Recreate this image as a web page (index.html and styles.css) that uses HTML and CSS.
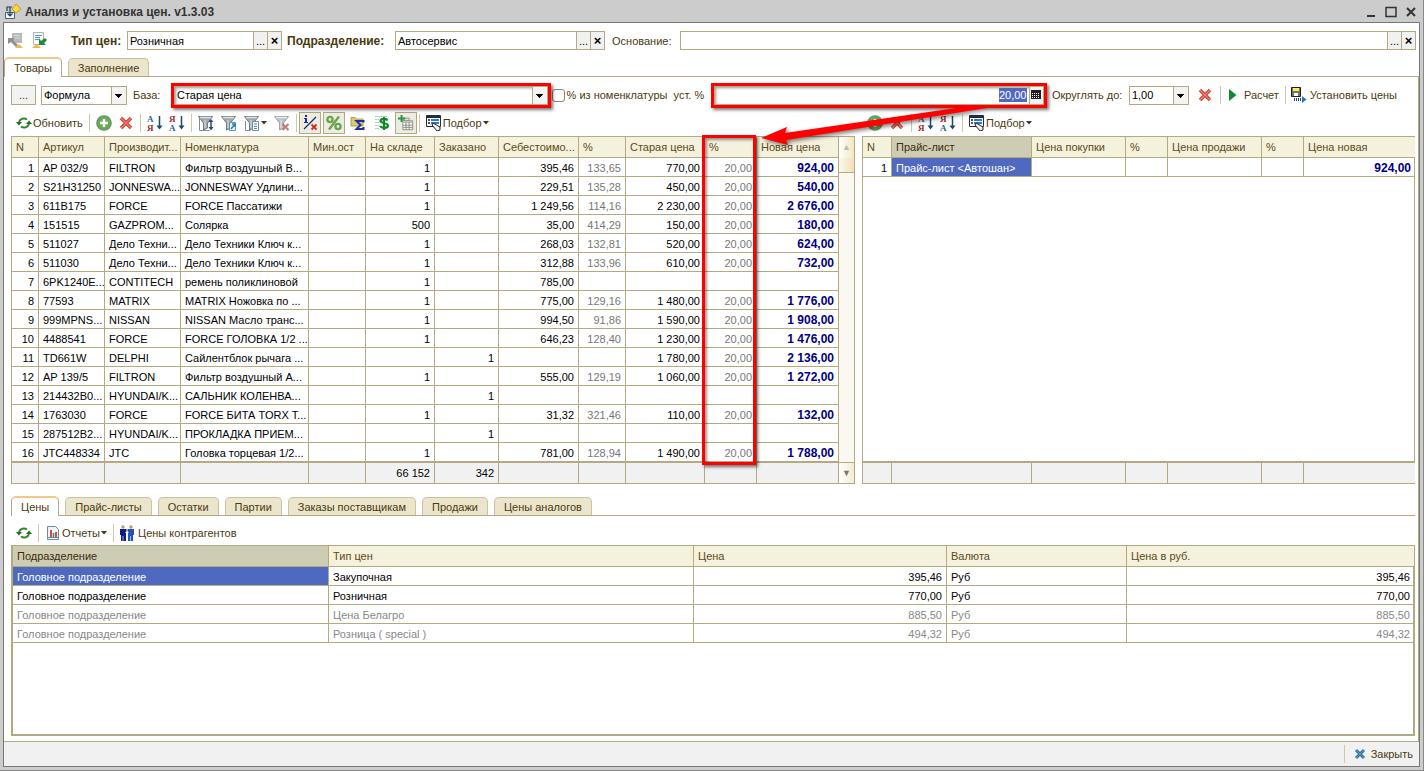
FILE: index.html
```html
<!DOCTYPE html>
<html lang="ru">
<head>
<meta charset="utf-8">
<title>Анализ и установка цен. v1.3.03</title>
<link rel="stylesheet" href="styles.css">
</head>
<body>
<svg class="defs" width="0" height="0" aria-hidden="true">
  <symbol id="refresh" viewBox="0 0 16 16"><path d="M3 7a5 4.500 0 0 1 8-2.500M13 9a5 4.500 0 0 1-8 2.500" fill="none" stroke="#2f8a2f" stroke-width="2"/><path d="M0 7h6L3 10.500zM10 9h6L13 5.500z" fill="#1f6f24"/></symbol>
  <symbol id="plus" viewBox="0 0 16 16"><circle cx="8" cy="8" r="7.800" fill="#6f8f66"/><circle cx="8" cy="8" r="6.500" fill="#68ad55"/><path d="M8 4v8M4 8h8" stroke="#fff" stroke-width="2.500"/></symbol>
  <symbol id="del" viewBox="0 0 16 16"><path d="M3 3l10 10M13 3L3 13" stroke="#d23a30" stroke-width="3.400"/><path d="M3 3l10 10M13 3L3 13" stroke="#ee8177" stroke-width="1.200"/></symbol>
  <symbol id="arrow-down" viewBox="0 0 16 18"><path d="M12.500 2v12" stroke="#234766" stroke-width="1.500"/><path d="M9.500 11.500h6l-3 4z" fill="#234766"/></symbol>
  <symbol id="funnel" viewBox="0 0 16 16"><path d="M.500 1.500h14L9.500 8v5l-4 2V8z" fill="#a3a8ab" stroke="#737b80"/><path d="M2 2.500h11" stroke="#dfe4e7" stroke-width="1.500"/><path d="M7 5v8" stroke="#dfe4e7"/></symbol>
  <symbol id="filter-set" viewBox="0 0 16 16"><path d="M1.500 3v12.500h10" fill="none" stroke="#7b8e9b"/><use href="#funnel"/><path d="M13 6v7" stroke="#2b4d6b" stroke-width="1.500"/><path d="M10.500 7L13 4 15.500 7zM10.500 12h5L13 15.500z" fill="#2b4d6b"/></symbol>
  <symbol id="filter-value" viewBox="0 0 16 16"><use href="#funnel"/><path d="M8.500 7.500h6v8h-6z" fill="#eaf4fb" stroke="#5793bd"/><path d="M10 14l4-5M11 9h3v3" fill="none" stroke="#357dad" stroke-width="1.500"/></symbol>
  <symbol id="filter-list" viewBox="0 0 16 16"><path d="M1.500 6v9.500h5" fill="none" stroke="#6d8ea6"/><use href="#funnel"/><path d="M8.500 6.500h6v9h-6z" fill="#f4f9fc" stroke="#6d8ea6"/><path d="M10 9h3M10 11.500h3M10 13.500h3" stroke="#5d86a3"/></symbol>
  <symbol id="filter-off" viewBox="0 0 16 16"><g opacity=".7"><use href="#funnel"/></g><path d="M8.500 9l6 6M14.500 9l-6 6" stroke="#c57a76" stroke-width="2"/></symbol>
  <symbol id="info" viewBox="0 0 16 16"><path d="M3 0h2v2H3zM2 3h3v4h1v1H2V7h1V4H2z" fill="#1c2d91"/><path d="M14 2L2 14" stroke="#1c2d60" stroke-width="1.300"/><path d="M9.500 9.500l5 5M14.500 9.500l-5 5" stroke="#d9281c" stroke-width="1.800"/></symbol>
  <symbol id="percent" viewBox="0 0 16 16"><g fill="none" stroke="#6aa54a" stroke-width="2.400"><circle cx="4" cy="4.500" r="2.600"/><circle cx="12" cy="11.500" r="2.600"/><path d="M13 1.500l-10 13"/></g></symbol>
  <symbol id="sum" viewBox="0 0 16 16"><path d="M1 2.500h4l1 1.500h7v7H1z" fill="#d8c977" stroke="#b3a04f"/><path d="M13.500 7.500V6H6.500l4 4-4 4h7v-2" fill="none" stroke="#23329b" stroke-width="2"/></symbol>
  <symbol id="dollar" viewBox="0 0 16 16"><path d="M1.500 1.500h12M1.500 4.500h4M1.500 7.500h4M1.500 10.500h4M1.500 13.500h4" stroke="#5aa6a0" stroke-dasharray="1 1"/><path d="M13.500 5.500c-1-2.500-7-2-7 .500s7.500 1.500 7.500 4.500-6.500 3-8 .500M10 2v13" fill="none" stroke="#0b8a23" stroke-width="2.200"/></symbol>
  <symbol id="grid-add" viewBox="0 0 18 18"><path d="M5.500 3.500h7v3h-7z" fill="#ddd" stroke="#858b82"/><path d="M5.500 6.500h11v10h-11z" fill="#f8f8f4" stroke="#858b82"/><path d="M6 8h10" stroke="#b9beb6" stroke-width="2"/><path d="M6 11.500h10M6 14h10M9 8v8M12.500 8v8" stroke="#858b82"/><path d="M4 0v8M0 4h8" stroke="#31933a" stroke-width="2.200"/></symbol>
  <symbol id="pick" viewBox="0 0 16 16"><path d="M.500.500h14v11H.500z" fill="#fff" stroke="#242a42"/><path d="M1 2h13" stroke="#242a42" stroke-width="2"/><path d="M5 5h8M5 8h8" stroke="#287fd0" stroke-width="2"/><path d="M2 5h2M2 8h2" stroke="#222" stroke-width="1.500"/><path d="M7 8l7 4v3l-3 1-5-6z" fill="#eee" stroke="#222"/></symbol>
  <symbol id="report" viewBox="0 0 14 16"><path d="M1.500 1.500h8l3 3v10h-11z" fill="#edf4f9" stroke="#6d8da5"/><path d="M2 12.500h10" stroke="#5f8db0"/><path d="M5 5v7M10 7v5" stroke="#d03a30" stroke-width="1.800"/><path d="M7.500 8v4" stroke="#3d9651" stroke-width="1.600"/></symbol>
  <symbol id="people" viewBox="0 0 14 16"><circle cx="3" cy="2" r="1.700" fill="#c29674"/><circle cx="11" cy="2" r="1.700" fill="#c29674"/><path d="M0 4h6.500v6H6v6H1v-6H0z" fill="#101a8e"/><path d="M7.500 4H14v6h-1v6H8v-6h-.500z" fill="#2452b8"/><path d="M3 11v5M10.500 11v5" stroke="#fff" stroke-width=".6"/><path d="M5 8l2-2 2 2H8v4H6V8z" fill="#fff"/></symbol>
  <symbol id="save" viewBox="0 0 16 16"><path d="M.500.500h9v9h-9z" fill="#737373" stroke="#222"/><path d="M2 1h6v3H2z" fill="#ffee4b"/><path d="M3 6h4v3H3z" fill="#fff"/><path d="M3 12.500h8" stroke="#244c7e" stroke-width="3" stroke-dasharray="1 1"/><path d="M11 9l4.500 3.500L11 16z" fill="#2876bb"/></symbol>
  <symbol id="play" viewBox="0 0 8 12"><path d="M0 0l7.500 6L0 12z" fill="#118a2f"/></symbol>
  <symbol id="calc" viewBox="0 0 10 10"><path d="M0 0h10v9H0z" fill="#222"/><path d="M1 3.500h8M1 5.500h8M1 7.500h8" stroke="#fff" stroke-dasharray="1 1"/></symbol>
  <symbol id="caret" viewBox="0 0 6 4"><path d="M0 0h6L3 3.500z" fill="#443617"/></symbol>
  <symbol id="doc-up" viewBox="0 0 17 17"><path d="M5 1h10v10H5z" fill="#b6b9ba"/><path d="M7 3.500h6M7 6h6" stroke="#d7dadb"/><path d="M1 6h7L6 8l5 5-2 2-5-5-3 2z" fill="#8e9192"/><path d="M8 16l4-4 4 4z" fill="#e5bd57"/></symbol>
  <symbol id="doc-down" viewBox="0 0 17 17"><path d="M2.500.500h10v12h-10z" fill="#f8fafb" stroke="#a9b6be"/><path d="M4 3.500h7M4 5.500h5M4 7.500h4" stroke="#5f9bc2"/><path d="M14 6l2 2-3 3 2 2H8V6l2 3z" fill="#1b8a39"/><path d="M1 16l4.500-4 4.500 4z" fill="#f0b93a"/></symbol>
  <symbol id="app" viewBox="0 0 16 16"><path d="M11 0l5 5-5 4-4-4z" fill="#fbd63f" stroke="#c39b20"/><path d="M.500 8.500h9v6h-9z" fill="#f4f9fd" stroke="#46627b"/><path d="M5 3v9M2.500 9.500L5 12l2.500-2.500M7 3H2v4" fill="none" stroke="#243f58" stroke-width="1.200"/></symbol>
  <symbol id="close" viewBox="0 0 12 12"><path d="M2 2l8 8M10 2l-8 8" stroke="#2f6e9e" stroke-width="3"/><path d="M2 2l8 8M10 2l-8 8" stroke="#5a9cca"/></symbol>
</svg>

<div class="window">
  <header class="titlebar">
    <svg class="i16"><use href="#app"/></svg>
    <h1>Анализ и установка цен. v1.3.03</h1>
    <button class="win" aria-label="Свернуть"><svg viewBox="0 0 12 12"><path d="M2 10h8" stroke="#333" stroke-width="2"/></svg></button>
    <button class="win" aria-label="Развернуть"><svg viewBox="0 0 12 12"><path d="M1 1.500h10v9H1z" fill="none" stroke="#333" stroke-width="1.500"/></svg></button>
    <button class="win" aria-label="Закрыть окно"><svg viewBox="0 0 12 12"><path d="M2 2l8 8M10 2l-8 8" stroke="#333" stroke-width="2"/></svg></button>
  </header>

  <main class="client">
    <form class="head">
      <button type="button" class="tool first" aria-label="Записать"><svg class="i17"><use href="#doc-up"/></svg></button>
      <button type="button" class="tool second" aria-label="Загрузить"><svg class="i17"><use href="#doc-down"/></svg></button>
      <label class="strong lb-type" for="type">Тип цен:</label>
      <div class="field f-type"><input id="type" value="Розничная"><button type="button" aria-label="Выбрать тип">...</button><button type="button" class="x" aria-label="Очистить тип">×</button></div>
      <label class="strong lb-dep" for="dep">Подразделение:</label>
      <div class="field f-dep"><input id="dep" value="Автосервис"><button type="button" aria-label="Выбрать подразделение">...</button><button type="button" class="x" aria-label="Очистить подразделение">×</button></div>
      <label class="lb-base" for="reason">Основание:</label>
      <div class="field grow"><input id="reason"><button type="button" aria-label="Выбрать основание">...</button><button type="button" class="x" aria-label="Очистить основание">×</button></div>
    </form>

    <nav class="tabs top"><button class="on">Товары</button><button>Заполнение</button></nav>

    <section class="panel">
      <form class="formula">
        <button type="button" class="dots" aria-label="Настройка">...</button>
        <div class="field pick f-formula"><select aria-label="Способ"><option>Формула</option></select></div>
        <label class="lb-b" for="basis">База:</label>
        <div class="mark m-basis"><div class="field pick"><select id="basis"><option>Старая цена</option></select></div></div>
        <input type="checkbox" id="nom" class="check"><label class="lb-nom" for="nom">% из номенклатуры</label>
        <label class="lb-pct" for="pct">уст. %</label>
        <div class="mark m-pct"><div class="field end"><input id="pct" class="sel" value="20,00"><button type="button" aria-label="Калькулятор"><svg width="10" height="10"><use href="#calc"/></svg></button></div></div>
        <label class="lb-round" for="round">Округлять до:</label>
        <div class="field pick f-round"><select id="round"><option>1,00</option></select></div>
        <button type="button" class="tool clear" aria-label="Очистить"><svg class="i16"><use href="#del"/></svg></button>
        <i class="sep"></i>
        <button type="button" class="tool calc"><svg width="8" height="12"><use href="#play"/></svg>Расчет</button>
        <i class="sep"></i>
        <button type="button" class="tool set"><svg class="i16"><use href="#save"/></svg>Установить цены</button>
      </form>

      <div class="split">
        <div class="left">
          <div class="bar">
            <button class="tool"><svg class="i16"><use href="#refresh"/></svg>Обновить</button><i class="sep"></i>
            <button class="tool" aria-label="Добавить"><svg class="i16"><use href="#plus"/></svg></button>
            <button class="tool" aria-label="Удалить"><svg class="i16"><use href="#del"/></svg></button><i class="sep"></i>
            <button class="tool" aria-label="По возрастанию"><svg class="i18" viewBox="0 0 16 18"><text x="0" y="8" class="glyph blue">А</text><text x="0" y="17" class="glyph red">Я</text><use href="#arrow-down"/></svg></button>
            <button class="tool" aria-label="По убыванию"><svg class="i18" viewBox="0 0 16 18"><text x="0" y="8" class="glyph red">Я</text><text x="0" y="17" class="glyph blue">А</text><use href="#arrow-down"/></svg></button><i class="sep"></i>
            <span class="filters">
            <button class="tool" aria-label="Отбор"><svg class="i16"><use href="#filter-set"/></svg></button>
            <button class="tool" aria-label="Отбор по значению"><svg class="i16"><use href="#filter-value"/></svg></button>
            <button class="tool" aria-label="Список отборов"><svg class="i16"><use href="#filter-list"/></svg><svg class="caret"><use href="#caret"/></svg></button>
            <button class="tool" aria-label="Снять отбор"><svg class="i16"><use href="#filter-off"/></svg></button>
            </span><i class="sep"></i>
            <span class="toggles">
            <button class="tool down" aria-label="Сведения"><svg class="i16"><use href="#info"/></svg></button>
            <button class="tool down" aria-label="Проценты"><svg class="i16"><use href="#percent"/></svg></button>
            <button class="tool" aria-label="Итоги"><svg class="i16"><use href="#sum"/></svg></button>
            <button class="tool" aria-label="Валюта"><svg class="i16"><use href="#dollar"/></svg></button>
            <button class="tool down" aria-label="Колонки"><svg class="i18"><use href="#grid-add"/></svg></button>
            </span><i class="sep"></i>
            <button class="tool"><svg class="i16"><use href="#pick"/></svg>Подбор<svg class="caret"><use href="#caret"/></svg></button>
          </div>
          <div class="gridbox">
            <table class="grid goods">
              <colgroup><col style="width:27px"><col style="width:66px"><col style="width:76px"><col style="width:128px"><col style="width:57px"><col style="width:69px"><col style="width:64px"><col style="width:80px"><col style="width:47px"><col style="width:79px"><col style="width:52px"><col style="width:82px"></colgroup>
              <thead><tr><th>N</th><th>Артикул</th><th>Производит...</th><th>Номенклатура</th><th>Мин.ост</th><th>На складе</th><th>Заказано</th><th>Себестоимо...</th><th>%</th><th>Старая цена</th><th>%</th><th>Новая цена</th></tr></thead>
              <tbody>
              <tr><td>1</td><td>AP 032/9</td><td>FILTRON</td><td>Фильтр воздушный B...</td><td></td><td>1</td><td></td><td>395,46</td><td>133,65</td><td>770,00</td><td>20,00</td><td>924,00</td></tr>
              <tr><td>2</td><td>S21H31250</td><td>JONNESWA...</td><td>JONNESWAY Удлини...</td><td></td><td>1</td><td></td><td>229,51</td><td>135,28</td><td>450,00</td><td>20,00</td><td>540,00</td></tr>
              <tr><td>3</td><td>611B175</td><td>FORCE</td><td>FORCE Пассатижи</td><td></td><td>1</td><td></td><td>1 249,56</td><td>114,16</td><td>2 230,00</td><td>20,00</td><td>2 676,00</td></tr>
              <tr><td>4</td><td>151515</td><td>GAZPROM...</td><td>Солярка</td><td></td><td>500</td><td></td><td>35,00</td><td>414,29</td><td>150,00</td><td>20,00</td><td>180,00</td></tr>
              <tr><td>5</td><td>511027</td><td>Дело Техни...</td><td>Дело Техники Ключ к...</td><td></td><td>1</td><td></td><td>268,03</td><td>132,81</td><td>520,00</td><td>20,00</td><td>624,00</td></tr>
              <tr><td>6</td><td>511030</td><td>Дело Техни...</td><td>Дело Техники Ключ к...</td><td></td><td>1</td><td></td><td>312,88</td><td>133,96</td><td>610,00</td><td>20,00</td><td>732,00</td></tr>
              <tr><td>7</td><td>6PK1240E...</td><td>CONTITECH</td><td>ремень поликлиновой</td><td></td><td>1</td><td></td><td>785,00</td><td></td><td></td><td></td><td></td></tr>
              <tr><td>8</td><td>77593</td><td>MATRIX</td><td>MATRIX Ножовка по ...</td><td></td><td>1</td><td></td><td>775,00</td><td>129,16</td><td>1 480,00</td><td>20,00</td><td>1 776,00</td></tr>
              <tr><td>9</td><td>999MPNS...</td><td>NISSAN</td><td>NISSAN Масло транс...</td><td></td><td>1</td><td></td><td>994,50</td><td>91,86</td><td>1 590,00</td><td>20,00</td><td>1 908,00</td></tr>
              <tr><td>10</td><td>4488541</td><td>FORCE</td><td>FORCE ГОЛОВКА 1/2 ...</td><td></td><td>1</td><td></td><td>646,23</td><td>128,40</td><td>1 230,00</td><td>20,00</td><td>1 476,00</td></tr>
              <tr><td>11</td><td>TD661W</td><td>DELPHI</td><td>Сайлентблок рычага ...</td><td></td><td></td><td>1</td><td></td><td></td><td>1 780,00</td><td>20,00</td><td>2 136,00</td></tr>
              <tr><td>12</td><td>AP 139/5</td><td>FILTRON</td><td>Фильтр воздушный A...</td><td></td><td>1</td><td></td><td>555,00</td><td>129,19</td><td>1 060,00</td><td>20,00</td><td>1 272,00</td></tr>
              <tr><td>13</td><td>214432B0...</td><td>HYUNDAI/K...</td><td>САЛЬНИК КОЛЕНВА...</td><td></td><td></td><td>1</td><td></td><td></td><td></td><td></td><td></td></tr>
              <tr><td>14</td><td>1763030</td><td>FORCE</td><td>FORCE БИТА TORX T...</td><td></td><td>1</td><td></td><td>31,32</td><td>321,46</td><td>110,00</td><td>20,00</td><td>132,00</td></tr>
              <tr><td>15</td><td>287512B2...</td><td>HYUNDAI/K...</td><td>ПРОКЛАДКА ПРИЕМ...</td><td></td><td></td><td>1</td><td></td><td></td><td></td><td></td><td></td></tr>
              <tr><td>16</td><td>JTC448334</td><td>JTC</td><td>Головка торцевая 1/2...</td><td></td><td>1</td><td></td><td>781,00</td><td>128,94</td><td>1 490,00</td><td>20,00</td><td>1 788,00</td></tr>
              </tbody>
              <tfoot><tr><td></td><td></td><td></td><td></td><td></td><td>66 152</td><td>342</td><td></td><td></td><td></td><td></td><td></td></tr></tfoot>
            </table>
            <div class="scroll"><span class="up">▲</span><span class="thumb"></span><span class="dn">▼</span></div>
            <div class="colmark"></div>
          </div>
        </div>

        <div class="right">
          <div class="bar">
            <button class="tool" aria-label="Добавить"><svg class="i16"><use href="#plus"/></svg></button>
            <button class="tool" aria-label="Удалить"><svg class="i16"><use href="#del"/></svg></button><i class="sep"></i>
            <button class="tool" aria-label="По возрастанию"><svg class="i18" viewBox="0 0 16 18"><text x="0" y="8" class="glyph blue">А</text><text x="0" y="17" class="glyph red">Я</text><use href="#arrow-down"/></svg></button>
            <button class="tool" aria-label="По убыванию"><svg class="i18" viewBox="0 0 16 18"><text x="0" y="8" class="glyph red">Я</text><text x="0" y="17" class="glyph blue">А</text><use href="#arrow-down"/></svg></button><i class="sep"></i>
            <button class="tool"><svg class="i16"><use href="#pick"/></svg>Подбор<svg class="caret"><use href="#caret"/></svg></button>
          </div>
          <div class="pricebox">
            <table class="grid price">
              <colgroup><col style="width:29px"><col style="width:140px"><col style="width:94px"><col style="width:42px"><col style="width:94px"><col style="width:42px"><col style="width:111px"></colgroup>
              <thead><tr><th>N</th><th class="cur">Прайс-лист</th><th>Цена покупки</th><th>%</th><th>Цена продажи</th><th>%</th><th>Цена новая</th></tr></thead>
              <tbody><tr><td>1</td><td class="act">Прайс-лист &lt;Автошан&gt;</td><td></td><td></td><td></td><td></td><td>924,00</td></tr>
              <tr class="rest"><td colspan="7"></td></tr></tbody>
              <tfoot><tr><td></td><td></td><td></td><td></td><td></td><td></td><td></td></tr></tfoot>
            </table>
          </div>
          <svg class="arrow" viewBox="0 0 260 50" aria-hidden="true"><path d="M20 30L46 19 44 25 215 0 246 0 45 32 47 37z" fill="#f00"/></svg>
        </div>
      </div>

      <nav class="tabs low"><button class="on">Цены</button><button>Прайс-листы</button><button>Остатки</button><button>Партии</button><button>Заказы поставщикам</button><button>Продажи</button><button>Цены аналогов</button></nav>
      <div class="bar lowbar">
        <button class="tool" aria-label="Обновить цены"><svg class="i16"><use href="#refresh"/></svg></button><i class="sep"></i>
        <button class="tool"><svg class="i16"><use href="#report"/></svg>Отчеты<svg class="caret"><use href="#caret"/></svg></button><i class="sep"></i>
        <button class="tool people"><svg class="i16"><use href="#people"/></svg>Цены контрагентов</button>
      </div>
      <div class="lowbox">
        <table class="grid prices">
          <colgroup><col style="width:316px"><col style="width:365px"><col style="width:253px"><col style="width:180px"><col style="width:287px"></colgroup>
          <thead><tr><th class="cur">Подразделение</th><th>Тип цен</th><th>Цена</th><th>Валюта</th><th>Цена в руб.</th></tr></thead>
          <tbody>
          <tr><td class="act">Головное подразделение</td><td>Закупочная</td><td>395,46</td><td>Руб</td><td>395,46</td></tr>
          <tr><td>Головное подразделение</td><td>Розничная</td><td>770,00</td><td>Руб</td><td>770,00</td></tr>
          <tr class="dim"><td>Головное подразделение</td><td>Цена Белагро</td><td>885,50</td><td>Руб</td><td>885,50</td></tr>
          <tr class="dim"><td>Головное подразделение</td><td>Розница ( special )</td><td>494,32</td><td>Руб</td><td>494,32</td></tr>
          </tbody>
        </table>
      </div>
    </section>
    <footer class="foot"><i class="sep"></i><button class="tool"><svg width="12" height="12"><use href="#close"/></svg>Закрыть</button></footer>
  </main>
</div>
</body>
</html>
```

FILE: styles.css
```css
* { box-sizing: border-box; }
:root { --line: #b3aa82; --ink: #4a3a10; --head: #f4f1dc; }
body { margin: 0; font: 11px/14px "Liberation Sans", Arial, sans-serif; color: var(--ink); background: #ccc; }
button, input, select { font: inherit; color: inherit; margin: 0; padding: 0; border: 0; background: none; }
svg { display: block; flex: none; }
.defs { position: absolute; }
.glyph { font: bold 9px "Liberation Serif", serif; }
.blue { fill: #2f628f; }
.red { fill: #9e2b2b; }
.i16 { width: 16px; height: 16px; }
.i17 { width: 17px; height: 17px; }
.i18 { width: 16px; height: 18px; }
.caret { width: 6px; height: 4px; }

.window { min-height: 100vh; display: flex; flex-direction: column; padding: 1px 3px 3px; border-right: 1px solid #888; border-bottom: 1px solid #888; background: #ccc; }
.titlebar { height: 21px; display: flex; align-items: center; gap: 8px; padding: 0 3px 0 2px; }
.titlebar h1 { flex: 1; margin: 0 0 0 -4px; font: bold 12px/16px "Liberation Sans", Arial, sans-serif; color: #333; }
.win svg { width: 12px; height: 12px; }
.client { flex: 1; display: flex; flex-direction: column; background: #fff; border: 1px solid #777; }

.head { display: flex; align-items: center; padding: 8px 3px 8px 3px; height: 35px; }
.tool { display: flex; align-items: center; gap: 1px; white-space: nowrap; }
.second { margin-left: 7px; }
.strong { font-weight: bold; font-size: 12px; }
.lb-type { width: 56px; margin-left: 23px; }
.lb-dep { width: 108px; margin-left: 5px; }
.lb-base { width: 68px; margin-left: 7px; }
.field { display: flex; height: 19px; border: 1px solid var(--line); background: #fff; color: #000; }
.field input, .field select { flex: 1; min-width: 0; width: 100%; padding-left: 2px; outline: 0; appearance: none; }
.field button { flex: none; width: 14px; border-left: 1px solid var(--line); background: #f1f1f1; display: grid; place-items: center; line-height: 12px; }
.field .x { font-weight: bold; font-size: 13px; }
.f-type { width: 155px; }
.f-dep { width: 210px; }
.grow { flex: 1; }
.pick { position: relative; }
.pick::after { content: ""; width: 14px; flex: none; border-left: 1px solid var(--line); background: linear-gradient(#000, #000) 3px 7px / 7px 1px no-repeat, linear-gradient(#000, #000) 4px 8px / 5px 1px no-repeat, linear-gradient(#000, #000) 5px 9px / 3px 1px no-repeat, linear-gradient(#000, #000) 6px 10px / 1px 1px no-repeat, #f3f3f3; pointer-events: none; }

.tabs { display: flex; align-items: flex-end; gap: 6px; height: 19px; border-bottom: 1px solid var(--line); }
.tabs button { height: 18px; padding: 0 9px; border: 1px solid #c9c2a0; border-bottom: 0; border-radius: 5px 5px 0 0; background: #ebe5cc; }
.tabs .on { height: 20px; margin-bottom: -1px; background: #fff; border-color: var(--line); border-top: 2px solid #f0c98a; }
.low { margin-top: 13px; }

.panel { flex: 1; display: flex; flex-direction: column; padding: 8px 3px 5px 7px; border-right: 1px solid var(--line); border-bottom: 1px solid var(--line); }
.formula { display: flex; align-items: center; height: 20px; }
.dots { width: 25px; height: 20px; border: 1px solid var(--line); background: #f2f2f2; }
.f-formula { width: 86px; margin-left: 5px; }
.lb-b { width: 44px; padding-left: 6px; }
.mark { border: 3px solid #f00; box-shadow: 2px 2px 3px #0008, inset 2px 2px 3px #0006; margin: -4px 0; z-index: 1; }
.mark .field { background: transparent; }
.m-basis { flex: 380; }
.m-pct { flex: 336; }
.end { justify-content: flex-end; align-items: center; }
.end button { height: 17px; }
.field .sel { flex: none; width: 28px; height: 14px; padding: 0; margin-right: 2px; background: #4f69c1; color: #fff; }
.check { width: 13px; height: 13px; margin: 0 2px 0 1px; appearance: none; border: 1px solid #8d8877; border-radius: 3px; background: #fff; }
.lb-nom { width: 107px; white-space: nowrap; }
.lb-pct { width: 37px; white-space: nowrap; }
.lb-round { width: 82px; padding-left: 5px; white-space: nowrap; }
.f-round { width: 60px; }
.clear { margin: 0 7px 0 8px; }
.calc { gap: 7px; margin: 0 6px 0 8px; }
.set { gap: 3px; margin: 0 18px 0 5px; }
.sep { width: 1px; height: 18px; background: #cfc7a6; flex: none; }

.split { display: grid; grid-template-columns: 844fr 553fr; gap: 7px; margin-top: 6px; }
.left, .right { min-width: 0; display: flex; flex-direction: column; position: relative; }
.bar { display: flex; align-items: center; height: 24px; gap: 6px; padding-left: 5px; }
.filters { display: flex; align-items: center; gap: 7px; }
.toggles { display: flex; align-items: center; gap: 2px; margin: 0 -4px; }
.toggles .tool { width: 22px; height: 22px; justify-content: center; }
.toggles .down { border: 1px solid var(--line); background: #ecebe4; }
.gridbox { display: flex; position: relative; border: 1px solid var(--line); margin-top: 1px; }
.pricebox { flex: 1; display: flex; border: 1px solid var(--line); margin-top: 1px; }
.grid { width: 100%; table-layout: fixed; border-collapse: separate; border-spacing: 0; color: #000; }
.grid th, .grid td { height: 19px; padding: 1px 4px 0; border-right: 1px solid var(--line); border-bottom: 1px solid var(--line); overflow: hidden; white-space: nowrap; text-align: left; font-weight: normal; }
.grid th { height: 21px; padding: 0 0 0 4px; background: var(--head); color: #5c4a18; }
.grid th.cur { background: #cfccb4; color: #3b2d0d; }
.grid td.act { background: #4f69c1; color: #fff; }
.grid tfoot td { height: 21px; padding-top: 0; background: #f1f1f1; border-bottom: 0; border-top: 1px solid var(--line); }
.goods { flex: 1; min-width: 0; }
.goods td:nth-child(-n+4) { padding-right: 0; }
.goods td:first-child { padding-right: 4px; }
.goods td:first-child, .goods td:nth-child(n+5), .price td:first-child, .price td:last-child, .prices td:nth-child(3), .prices td:last-child { text-align: right; }
.goods td:nth-child(9), .goods td:nth-child(11) { color: #777; }
.goods tbody td:last-child, .price tbody tr:first-child td:last-child { color: #000080; font-weight: bold; font-size: 12px; }
.scroll { flex: none; width: 15px; display: flex; flex-direction: column; align-items: center; background: #faf8f0; color: #777; font-size: 9px; }
.up { width: 15px; height: 21px; line-height: 20px; text-align: center; background: linear-gradient(90deg, #fff, #f4e5bd); color: #bbb; }
.thumb { width: 15px; height: 15px; border-bottom: 1px solid var(--line); background: linear-gradient(90deg, #faf8f0, #f3dfb3); }
.dn { width: 15px; height: 21px; line-height: 20px; text-align: center; margin-top: auto; background: linear-gradient(90deg, #fff, #f3ead0); border-top: 1px solid var(--line); }
.colmark { position: absolute; left: 82%; top: -2px; bottom: 18px; width: 54px; border: 3px solid #f00; box-shadow: 2px 2px 3px #0008, inset 2px 2px 3px #0006; }
.price { height: 100%; }
.price tr > :last-child, .prices tr > :last-child { border-right: 0; }
.price .rest td { height: auto; }
.arrow { position: absolute; left: -121px; top: -3px; width: 260px; height: 50px; z-index: 2; filter: drop-shadow(2px 2px 2px #0008); pointer-events: none; }

.lowbar { height: 29px; padding-top: 4px; }
.lowbar .people { gap: 3px; margin-left: -1px; }
.lowbox { flex: 1; border: 2px solid var(--line); border-top-width: 1px; border-left-width: 2px; }
.prices .dim { color: #888; }
.foot { height: 24px; display: flex; align-items: center; justify-content: flex-end; gap: 9px; padding-right: 6px; background: #f1f1f1; }
.foot .tool { gap: 5px; }
```
